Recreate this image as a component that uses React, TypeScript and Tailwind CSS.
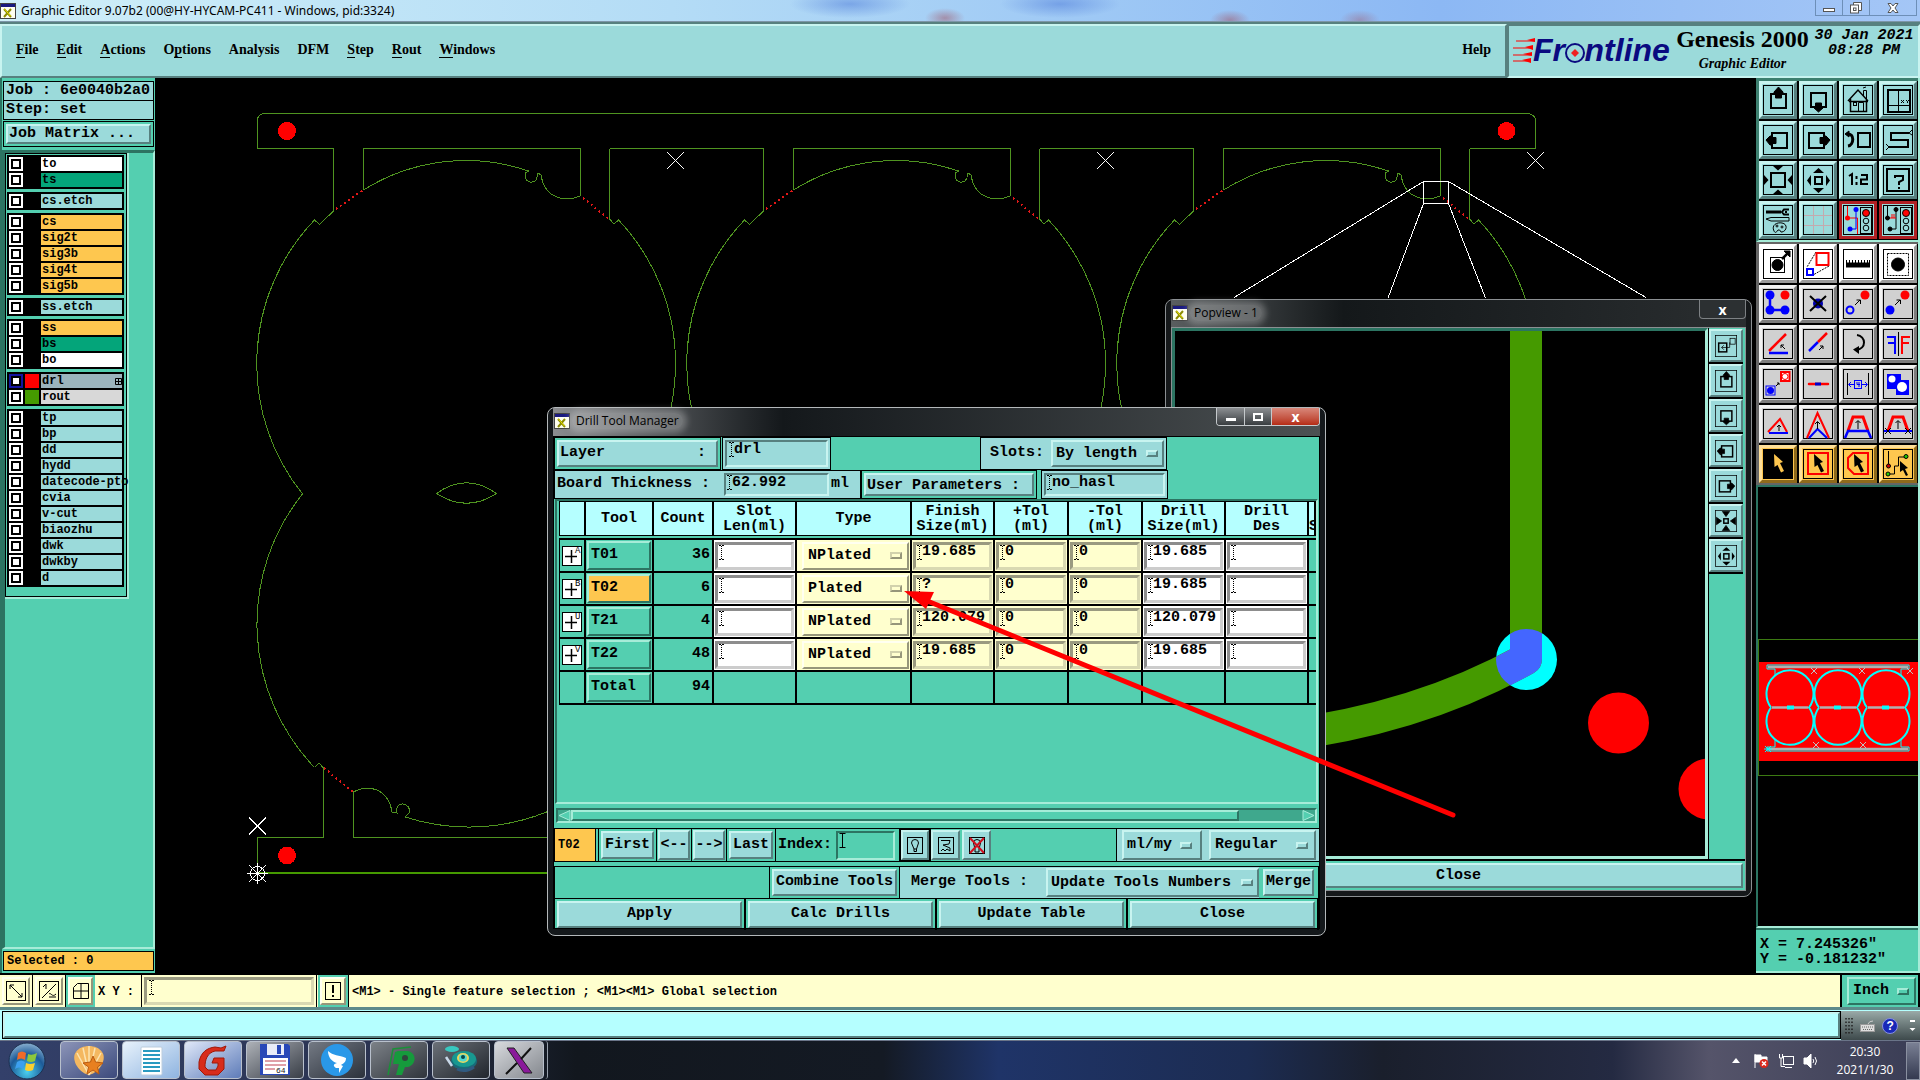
import React, { ReactNode } from 'react';

/* Raised and sunken Motif bevels */
const UP = 'border-2 border-t-[#c8f4f0] border-l-[#c8f4f0] border-r-[#57807f] border-b-[#57807f]';
const UP_GREEN = 'border-2 border-t-[#a6ecd8] border-l-[#a6ecd8] border-r-[#2c7462] border-b-[#2c7462]';
const UP_GREY = 'border-[3px] border-t-[#f2f2f2] border-l-[#f2f2f2] border-r-[#7c7c7c] border-b-[#7c7c7c]';
const UP_YELLOW = 'border-2 border-t-[#fffff0] border-l-[#fffff0] border-r-[#96967a] border-b-[#96967a]';
const NUB_YELLOW = 'border-2 border-t-[#d2d2ac] border-l-[#d2d2ac] border-r-[#96967a] border-b-[#96967a]';
const IN = 'border-2 border-t-[#57807f] border-l-[#57807f] border-r-[#c8f4f0] border-b-[#c8f4f0]';
const IN_GREEN = 'border-2 border-t-[#2c7462] border-l-[#2c7462] border-r-[#a6ecd8] border-b-[#a6ecd8]';
const IN_YELLOW = 'border-[3px] border-t-[#9a9a80] border-l-[#9a9a80] border-r-[#d9d9b2] border-b-[#d9d9b2]';
const IN_WHITE = 'border-[3px] border-t-[#8d8d8d] border-l-[#8d8d8d] border-r-[#cccccc] border-b-[#cccccc]';

function XIcon() {
  return (
    <svg width="16" height="16" viewBox="0 0 16 16" className="shrink-0">
      <rect x="0.5" y="0.5" width="15" height="15" fill="#fffff0" stroke="#444" />
      <rect x="1" y="1" width="14" height="3" fill="#1a1a80" />
      <path d="M4 6 L11 14 M11 6 L4 14" stroke="#8c8c00" strokeWidth="2" />
      <path d="M4.5 6 L10.5 13" stroke="#e8e000" strokeWidth="1" />
    </svg>
  );
}

function Beam() {
  return (
    <svg width="5" height="15" viewBox="0 0 5 15" className="shrink-0">
      <path d="M0 0.5 H2 M3 0.5 H5 M0 14.5 H2 M3 14.5 H5" stroke="#000" strokeWidth="1" />
      <path d="M2.5 1 V14" stroke="#000" strokeWidth="1" strokeDasharray="1 1" />
    </svg>
  );
}

function Field({ label, value, className }: { label: string; value: string; className: string }) {
  return (
    <div className={`flex items-start overflow-hidden ${className}`}>
      <Beam />
      <input
        aria-label={label}
        defaultValue={value}
        className="h-[14px] w-0 min-w-0 flex-1 bg-transparent text-[15px] leading-[14px] font-bold outline-none"
      />
    </div>
  );
}

function Menu({ label, value, options, className, nub }: { label: string; value: string; options: string[]; className: string; nub: string }) {
  return (
    <div className={`flex items-center ${className}`}>
      <select aria-label={label} defaultValue={value} className="min-w-0 flex-1 appearance-none bg-transparent text-[15px] leading-5 font-bold outline-none">
        {options.map((o) => (
          <option key={o}>{o}</option>
        ))}
      </select>
      <span className={`h-[7px] w-3 shrink-0 ${nub}`} />
    </div>
  );
}

/* ---------- tool icons, drawn in a 30 x 30 frame ---------- */
const Frame = ({ children, size = 30, fill = 'none' }: { children?: ReactNode; size?: number; fill?: string }) => (
  <svg width={size} height={size} viewBox="0 0 30 30" fill="none" stroke="#000" strokeWidth="1" className="shrink-0">
    <rect x="0.5" y="0.5" width="29" height="29" fill={fill} />
    {children}
  </svg>
);
const box = (x: number, y: number, w: number, h: number) => <rect x={x} y={y} width={w} height={h} strokeWidth="2" />;
const iUp = <>{box(8, 9, 15, 14)}<path d="M15.5 2 L20 7 V8 H18.500 V13 H12.500 V8 H11 V7z" fill="#000" /></>;
const iDown = <>{box(8, 8, 15, 14)}<path d="M15.500 27 L20 23 V22 H18.500 V18 H12.500 V22 H11 V23z" fill="#000" /></>;
const iLeft = <>{box(9, 8, 15, 15)}<path d="M3 15 L7 11 H8 V12.500 H13 V18.500 H8 V20 H7z" fill="#000" /></>;
const iRight = <>{box(6, 8, 15, 15)}<path d="M27 15 L23 11 H22 V12.500 H17 V18.500 H22 V20 H23z" fill="#000" /></>;
const iIn = (
  <>
    {box(8, 8, 14, 14)}
    <g fill="#000" stroke="none">
      <path d="M10 1 H20 L15 5.500z M10 29 H20 L15 24.500z M1 10 V20 L5.500 15z M29 10 V20 L24.500 15z" />
    </g>
  </>
);
const iOut = (
  <>
    {box(12, 12, 7, 7)}
    <g fill="#000" stroke="none">
      <path d="M10 8 H21 L15.500 3z M10 23 H21 L15.500 28z M8 10 V21 L4 15.500z M23 10 V21 L27 15.500z" />
    </g>
  </>
);
const lights = (
  <>
    <rect x="17.500" y="2.500" width="11" height="26" />
    <circle cx="23" cy="8" r="3.500" fill="#f00" />
    <circle cx="23" cy="16" r="2.800" />
    <circle cx="23" cy="23" r="2.800" />
  </>
);
const viewIcons: { name: string; art: ReactNode; red?: boolean }[] = [
  { name: 'Pan up', art: iUp },
  { name: 'Pan down', art: iDown },
  {
    name: 'Home',
    art: (
      <>
        <path d="M5 16 L15 5 L25 16 M7.500 14 V26.500 H23.500 V14 M6 16.500 H25" strokeWidth="1.500" />
        <rect x="10.500" y="17.500" width="3" height="3" />
        <path d="M15.500 26 V17.500 H20.500 V26 M20.500 11 V5.500 H23.500 V14 M20 3 L23 2" />
      </>
    ),
  },
  {
    name: 'Window coordinates',
    art: (
      <>
        {box(5, 5, 22, 22)}
        <path d="M15.500 5 V27 M5 20.500 H27" />
        <path d="M18 15 L21 18 M21 15 L18 18 M23 15 L24.500 16.500 L26 15 M24.500 16.500 V18" />
      </>
    ),
  },
  { name: 'Pan left', art: iLeft },
  { name: 'Pan right', art: iRight },
  {
    name: 'Previous view',
    art: (
      <>
        {box(15, 8, 12, 14)}
        <path d="M4 9 C12 8 11 20 5 21" strokeWidth="3" />
        <path d="M2 9 L6 6 V12z" fill="#000" />
      </>
    ),
  },
  {
    name: 'Serpentine',
    art: (
      <>
        <path d="M26 8 H8 V15 H25 V22 H6" strokeWidth="2" />
        <path d="M26 8 L29 5 M26 8 L29 10 M6 22 L3 19 M6 22 L3 25" />
      </>
    ),
  },
  { name: 'Zoom in', art: iIn },
  { name: 'Zoom out', art: iOut },
  {
    name: 'Zoom 1:2',
    art: <path d="M6 11 L9 9 V20 M13.500 11 V14 M13.500 17 V20 M18 10 H24 V14.500 H18 V19 H25" strokeWidth="2" />,
  },
  {
    name: 'Query',
    art: (
      <>
        {box(4, 4, 22, 22)}
        <path d="M12 13 V11 H20 V15 L16 17 V20 M16 22 V24" strokeWidth="2" />
      </>
    ),
  },
  {
    name: 'Configure',
    art: (
      <>
        <path d="M3 7 H18" strokeWidth="3" />
        <path d="M26 4.500 H21 L19 7 L21 9.500 H26 M24 7 H22" strokeWidth="2" />
        <path d="M3 14 L8 12.500 H26 V16 H8z" />
        <path d="M11 26 C8 20 14 17 19 18 C25 19 24 26 19 27 C17 28 18 24 15 25 C13 28 12 28 11 26z" />
        <circle cx="14" cy="21" r="1" />
        <circle cx="19" cy="22" r="1" />
      </>
    ),
  },
  {
    name: 'Grid',
    art: <path d="M10.500 1 V29 M20.500 1 V29 M1 10.500 H29 M1 20.500 H29" stroke="#c4a9ae" />,
  },
  {
    name: 'Net display',
    red: true,
    art: (
      <>
        <path d="M4.500 1 V13 H14.500 V29" stroke="#f00" />
        <path d="M13 5 V24 H7" stroke="#00f" />
        <circle cx="4.500" cy="13" r="2.500" fill="#f00" stroke="none" />
        <circle cx="13" cy="4.500" r="2.500" fill="#00f" stroke="none" />
        <circle cx="7" cy="24" r="2.500" fill="#00f" stroke="none" />
        {lights}
      </>
    ),
  },
  {
    name: 'Net check',
    red: true,
    art: (
      <>
        <path d="M4.500 1 V13 M13 5 V24 H7" />
        <path d="M6 13 H13 M9 9 V13 M11 9 V13" stroke="#f00" />
        <circle cx="4.500" cy="13" r="2" fill="#000" />
        <circle cx="13" cy="4.500" r="2" fill="#000" />
        <circle cx="7" cy="24" r="2" fill="#000" />
        {lights}
      </>
    ),
  },
];

const cursor = 'M11 5 L20 13 L17 14 L21 22 L18 23.500 L14.500 16 L11.500 18z';
const editIcons: { name: string; tone: 'white' | 'grey' | 'orange'; art: ReactNode; fill?: string }[] = [
  { name: 'Feature size', tone: 'white', art: <><rect x="7.500" y="8.500" width="14" height="15" /><circle cx="14.500" cy="16" r="5.500" fill="#000" /><path d="M19 10 L25 4" strokeWidth="2.500" /><path d="M21 2 H27 V8z" fill="#000" /></> },
  { name: 'Scale', tone: 'white', art: <><path d="M13 3 L4 18 M26 17 L10 26" strokeDasharray="2 1" /><rect x="13.500" y="4" width="12" height="12" stroke="#f00" strokeWidth="2" /><rect x="4" y="20" width="6" height="6" stroke="#00f" strokeWidth="2" /></> },
  { name: 'Measure', tone: 'white', art: <><path d="M3 16 H27" strokeWidth="5" /><path d="M3.500 11 V15 M6.500 11 V15 M9.500 11 V15 M12.500 11 V15 M15.500 11 V15 M18.500 11 V15 M21.500 11 V15 M24.500 11 V15 M26.500 11 V15" /></> },
  { name: 'Select feature', tone: 'white', art: <><rect x="4.500" y="4.500" width="21" height="22" strokeDasharray="2 1" /><circle cx="15" cy="15.500" r="6.500" fill="#000" /></> },
  { name: 'Copy points', tone: 'grey', art: <><path d="M7 6 V21 H22" stroke="#00f" strokeWidth="2.500" /><g stroke="none"><circle cx="7" cy="6" r="4.500" fill="#00f" /><circle cx="7" cy="21" r="4.500" fill="#00f" /><circle cx="22" cy="21" r="4.500" fill="#00f" /><circle cx="22" cy="6" r="4.500" fill="#f00" /></g></> },
  { name: 'Delete', tone: 'grey', art: <><circle cx="15" cy="14.500" r="5" fill="#0000b0" stroke="none" /><path d="M7 7 L23 22 M23 7 L7 22" strokeWidth="2" /></> },
  { name: 'Copy feature', tone: 'grey', art: <><circle cx="7" cy="21" r="3.500" stroke="#00f" strokeWidth="2" /><circle cx="22" cy="6" r="4.500" fill="#f00" stroke="none" /><path d="M12 16 L17 11 M13.500 11 H17.500 V15" /></> },
  { name: 'Move feature', tone: 'grey', art: <><circle cx="7" cy="21" r="4.500" fill="#00f" stroke="none" /><circle cx="22" cy="6" r="4.500" fill="#f00" stroke="none" /><path d="M12 16 L17 11 M13.500 11 H17.500 V15" /></> },
  { name: 'Rotate line', tone: 'grey', art: <><path d="M6 22 L23 5" stroke="#f00" strokeWidth="2.500" /><path d="M6 24 H25" stroke="#00f" strokeWidth="2.500" /><path d="M22 20 L18 16 M18 19 V16 H21" /></> },
  { name: 'Stretch line', tone: 'grey', art: <><path d="M6 22 L15 13" stroke="#00f" strokeWidth="2.500" /><path d="M15 13 L24 4" stroke="#f00" strokeWidth="2.500" /><path d="M16 21 L20 17 M17 17 H20 V20" /></> },
  { name: 'Rotate', tone: 'grey', art: <><path d="M14 6 C23 7 24 20 13 21" strokeWidth="2" /><path d="M16 17 L10 20.500 L16 25z" fill="#000" stroke="none" /></> },
  { name: 'Mirror', tone: 'grey', art: <><path d="M15.500 3 V27" /><path d="M4 8 H12 V25 M5 14 H12" stroke="#00f" strokeWidth="2" /><path d="M27 8 H19 V25 M26 14 H19" stroke="#f00" strokeWidth="2" /></> },
  { name: 'Substitute', tone: 'grey', art: <><rect x="3" y="17" width="9" height="9" stroke="#00f" /><circle cx="7.500" cy="21.500" r="3.500" fill="#00f" stroke="none" /><rect x="18" y="3" width="8.500" height="9" fill="#fff" stroke="#f00" strokeWidth="2" /><circle cx="22" cy="7.500" r="3" stroke="#f00" /><path d="M13 17 L16 14 M14 14 H16 V16" /></> },
  { name: 'Break line', tone: 'grey', art: <><path d="M6 15 H25" stroke="#f00" strokeWidth="2.500" strokeLinecap="round" /><path d="M12 15 H18" stroke="#00c" strokeWidth="3" /></> },
  { name: 'Spacing', tone: 'grey', art: <><path d="M4.500 4 V26 M25.500 4 V26" /><path d="M6 15.500 H11 M19 15.500 H24 M8 13 L5.500 15.500 L8 18 M22 13 L24.500 15.500 L22 18" stroke="#00f" /><rect x="11.500" y="11.500" width="7" height="8" stroke="#00f" /><path d="M14 13 V15.500 H17 M16 13 V18" stroke="#00f" /></> },
  { name: 'Contourize', tone: 'grey', art: <><path d="M4 5 H18 V11 H26 V26 H13 V20 H4z" fill="#00f" stroke="none" /><circle cx="9" cy="10" r="3.500" fill="#fff" stroke="none" /><circle cx="19" cy="18" r="5" fill="#fff" stroke="none" /></> },
  { name: 'Chamfer', tone: 'grey', art: <><path d="M5 23 L17 10 L24 23" stroke="#f00" strokeWidth="2" /><path d="M6 24 H25" stroke="#00f" strokeWidth="2" /><path d="M16 22 V16 M14 18 L16 16 L18 18" /></> },
  { name: 'Move corner', tone: 'grey', art: <><path d="M4 29 L14.500 4 L26 29" stroke="#f00" strokeWidth="2" /><path d="M6 29 L14.500 20 L24 29" stroke="#00f" strokeWidth="2" /><path d="M14.500 20 V13 M12 15 L14.500 12.500 L17 15" /></> },
  { name: 'Stretch parallel', tone: 'grey', art: <><path d="M5 22 L10 8 H20 L25 22" stroke="#f00" strokeWidth="3" /><path d="M2 29 L5 22 H25 L28 29" stroke="#00f" strokeWidth="2.500" /><path d="M15 20 V12 M12.500 14 L15 11.500 L17.500 14" /></> },
  { name: 'Trim parallel', tone: 'grey', art: <><path d="M5 22 L10 8 H20 L25 22" stroke="#f00" strokeWidth="3" /><path d="M1 22 H29" stroke="#00f" strokeWidth="2" /><path d="M2 19 L8 25 M8 19 L2 25 M22 19 L28 25 M28 19 L22 25 M15 20 V12 M12.500 14 L15 11.500 L17.500 14" /></> },
  { name: 'Select', tone: 'orange', fill: '#000', art: <path d={cursor} fill="#fec74f" stroke="none" /> },
  { name: 'Select in rectangle', tone: 'orange', art: <><rect x="5" y="4" width="20" height="21" stroke="#f00" strokeWidth="2" /><path d={cursor} fill="#000" stroke="none" /></> },
  { name: 'Select in polygon', tone: 'orange', art: <><path d="M10 4 H25 V25 H11 L5 19 V9z" stroke="#f00" strokeWidth="2" /><path d={cursor} fill="#000" stroke="none" /></> },
  { name: 'Select net', tone: 'orange', art: <><path d="M5.500 2 V16 M5 25 H11.500 V17 H15.500 V8 H23" /><circle cx="5.500" cy="17" r="2" fill="#c00" /><circle cx="5" cy="25" r="2" fill="#2c0" /><circle cx="23" cy="7.500" r="2" fill="#2c0" /><path d="M17 12 L25 19 L22 20 L25 26 L23 27 L20 21 L17 23z" fill="#000" stroke="none" /></> },
];

function ToolGrid() {
  return (
    <>
      <div className="border-t-[3px] border-l-[3px] border-b-2 border-t-[#3d8070] border-l-[#3d8070] border-b-[#a6ecd8] bg-black pr-px pb-px">
        <div className="grid grid-cols-4 gap-[2px]">
          {viewIcons.map((i) => (
            <button
              key={i.name}
              aria-label={i.name}
              className={
                i.red
                  ? 'flex h-[38px] items-center justify-center border-[3px] border-[#b02024] bg-[#9bdada]'
                  : 'flex h-[38px] items-center justify-center border-[3px] border-t-[#c8f4f0] border-l-[#c8f4f0] border-r-[#57807f] border-b-[#57807f] bg-[#9bdada]'
              }
            >
              <Frame>{i.art}</Frame>
            </button>
          ))}
        </div>
      </div>
      <div className="border-t-2 border-l-[3px] border-b-2 border-[#666] bg-black pr-px">
        <div className="grid grid-cols-4 gap-[2px]">
          {editIcons.map((i) => (
            <button
              key={i.name}
              aria-label={i.name}
              className={
                i.tone === 'orange'
                  ? 'flex h-[38px] items-center justify-center border-[3px] border-t-[#ffe09a] border-l-[#ffe09a] border-r-[#8f6a1c] border-b-[#8f6a1c] bg-[#fec74f]'
                  : i.tone === 'white'
                    ? 'flex h-[39px] items-center justify-center border-[3px] border-t-white border-l-white border-r-[#9a9a9a] border-b-[#9a9a9a] bg-white'
                    : `flex h-[38px] items-center justify-center bg-[#d0d0d0] ${UP_GREY}`
              }
            >
              <Frame fill={i.fill}>{i.art}</Frame>
            </button>
          ))}
        </div>
      </div>
    </>
  );
}

/* ---------- layer list ---------- */
const groups: { n: string; c: string; swatch?: string; on?: boolean }[][] = [
  [{ n: 'to', c: 'bg-white' }, { n: 'ts', c: 'bg-[#04a57a]' }],
  [{ n: 'cs.etch', c: 'bg-[#9bdada]' }],
  [
    { n: 'cs', c: 'bg-[#fec74f]' },
    { n: 'sig2t', c: 'bg-[#fec74f]' },
    { n: 'sig3b', c: 'bg-[#fec74f]' },
    { n: 'sig4t', c: 'bg-[#fec74f]' },
    { n: 'sig5b', c: 'bg-[#fec74f]' },
  ],
  [{ n: 'ss.etch', c: 'bg-[#9bdada]' }],
  [{ n: 'ss', c: 'bg-[#fec74f]' }, { n: 'bs', c: 'bg-[#04a57a]' }, { n: 'bo', c: 'bg-white' }],
  [
    { n: 'drl', c: 'bg-[#9bb4bd]', swatch: 'bg-[#ff0000]', on: true },
    { n: 'rout', c: 'bg-[#d8d8d8]', swatch: 'bg-[#459a00]' },
  ],
  ['tp', 'bp', 'dd', 'hydd', 'datecode-pto', 'cvia', 'v-cut', 'biaozhu', 'dwk', 'dwkby', 'd'].map((n) => ({ n, c: 'bg-[#9bdada]' })),
];

function Sidebar() {
  return (
    <aside className="flex w-[155px] shrink-0 flex-col border-l-2 border-[#2c7462] bg-[#54cfb0]">
      <div className="mx-px mt-[3px] border border-black bg-[#9bdada] pl-[2px] text-[15px] leading-[18px] font-bold whitespace-nowrap">Job : 6e0040b2a0</div>
      <div className="mx-px border border-t-0 border-black bg-[#9bdada] pl-[2px] text-[15px] leading-[18px] font-bold">Step: set</div>
      <div className="mx-px mt-px border border-black p-[2px]">
        <button className={`block w-full bg-[#9bdada] pl-px text-left text-[15px] leading-4 font-bold ${UP}`}>Job Matrix ...</button>
      </div>
      <div className="mt-[3px] flex flex-1 flex-col items-start border-t-[3px] border-r-2 border-b-2 border-l-[3px] border-t-[#2c7462] border-l-[#2c7462] border-r-[#a6ecd8] border-b-[#a6ecd8]">
        <div className="w-[124px] border-r-2 border-b-2 border-[#a6ecd8]">
          <div className="flex flex-col gap-[3px] border border-black pt-px pr-[2px] pb-[9px] pl-px">
            {groups.map((g, k) => (
              <div key={k} className="flex flex-col gap-[2px] bg-black p-[2px]">
                {g.map((l) => (
                  <label key={l.n} className="flex h-[14px] gap-[2px]">
                    <input
                      type="checkbox"
                      aria-label={l.n}
                      defaultChecked={l.on}
                      className="h-[14px] w-[14px] shrink-0 appearance-none border-[3px] border-white bg-white outline-2 -outline-offset-4 outline-black checked:border-[#1414a0] checked:bg-white"
                    />
                    <span className={`w-[14px] shrink-0 ${l.swatch ?? 'bg-black'}`} />
                    <span className={`flex min-w-0 flex-1 items-center justify-between pl-px text-xs leading-[14px] font-bold whitespace-nowrap ${l.c}`}>
                      {l.n}
                      {l.on && (
                        <svg width="7" height="7" viewBox="0 0 7 7" className="shrink-0">
                          <path d="M0.500 0.500 H6.500 V6.500 H0.500z M3.500 0 V7 M0 3.500 H7" fill="none" stroke="#000" />
                        </svg>
                      )}
                    </span>
                  </label>
                ))}
              </div>
            ))}
          </div>
        </div>
      </div>
      <div className="mx-px my-[2px] border border-black bg-[#fec74f] pl-[3px] text-xs leading-[18px] font-bold">Selected : 0</div>
    </aside>
  );
}

/* ---------- board drawing ---------- */
function Cell({ dx }: { dx: number }) {
  return (
    <g transform={`translate(${dx} 0)`}>
      <path d="M333.500 148.500 V211 L319.500 224.500 L314.500 220 A208 208 0 0 0 302.500 494 A208 208 0 0 0 314.500 767.500" />
      <path d="M363.500 190 V148.500 H580.500 V196" />
      <path d="M363.500 190 A196 200 0 0 1 528.500 171 L525.500 173 C522 184 539 186 537 174 L538 173 L541 175 C545 200 567 202 580 196" />
      <path d="M609.500 148.500 V219 L614 224 L618.500 220 A208 208 0 0 1 675.500 364 A208 208 0 0 1 630.500 494" />
      <path d="M436.500 493.500 Q466.500 472 496.500 493.500 Q466.500 513 436.500 493.500z" />
      <path d="M336 209 L363 190 M583 198 L609 219" stroke="#e01818" strokeWidth="2" strokeDasharray="2 3" />
    </g>
  );
}
const cross = (x: number, y: number) => `M${x - 8.5} ${y - 8.5} l17 17 M${x + 8.5} ${y - 8.5} l-17 17 `;

function Board() {
  return (
    <svg className="absolute inset-0 h-full w-full" aria-label="Board outline" shapeRendering="crispEdges">
      <g transform="translate(-155 -78)" fill="none" stroke="#4f9420" strokeWidth="1">
        <path d="M333.500 148.500 H257.500 V121 Q257.500 113.500 265 113.500 H1527 Q1535.500 114 1535.500 121 V148.500 H1469.500 M609.500 148.500 H763.500 M1039.500 148.500 H1193.500" />
        <Cell dx={0} />
        <Cell dx={430} />
        <Cell dx={860} />
        <path d="M314.500 767.500 L319 763 L323.500 768 V837.500 H257.500 V873 M353.500 792 V837.500 H700 M353.500 792 C368 784 388 788 392 812 L397 813 C394 800 412 802 409 813 L405 817 A208 208 0 0 0 560 806" />
        <path d="M257.500 873 H700" stroke="#459a00" strokeWidth="2" />
        <path d="M324 768 L353 792" stroke="#e01818" strokeWidth="2" strokeDasharray="2 3" />
        <g fill="#f00" stroke="none">
          <circle cx="287" cy="131" r="9" />
          <circle cx="1506.500" cy="131" r="9" />
          <circle cx="287" cy="855.500" r="9" />
        </g>
        <g stroke="#fff">
          <path d={cross(675.5, 160.5) + cross(1105.5, 160.5) + cross(1535.5, 160.5) + cross(257.5, 826) + cross(257.5, 873.5)} />
          <path d="M247 873.500 H268 M257.500 863 V884" />
          <circle cx="257.500" cy="873.500" r="7" />
          <path d="M1423.500 181.500 H1448.500 V203.500 H1423.500z M1423.500 181.500 L1234 297.500 M1423.500 203.500 L1388 298 M1448.500 203.500 L1485.500 298 M1448.500 181.500 L1646 297.500" />
        </g>
      </g>
    </svg>
  );
}

/* ---------- popview ---------- */
const popIcons = [
  { n: 'Popview frame', a: <>{box(5, 11, 11, 12)}<rect x="20.500" y="4.500" width="7" height="8" /><path d="M9 17 H20 V10 M12 14 L9 17 L12 20" /></> },
  { n: 'Popview up', a: iUp },
  { n: 'Popview down', a: iDown },
  { n: 'Popview left', a: iLeft },
  { n: 'Popview right', a: iRight },
  { n: 'Popview zoom in', a: <><path d="M10 2 H20 L15 9z M10 28 H20 L15 21z M2 10 V20 L9 15z M28 10 V20 L21 15z" fill="#000" /><rect x="12" y="12" width="6" height="6" strokeWidth="2" /></> },
  { n: 'Popview zoom out', a: iOut },
];

const glow = 'rounded-full bg-white/25 px-1 leading-4 shadow-[0_0_6px_4px_rgba(255,255,255,0.25)]';

function Popview() {
  return (
    <section className="absolute top-[299px] left-[1165px] flex h-[598px] w-[587px] flex-col rounded-lg border border-[#8b8f92] bg-[#15181a] px-[5px] pb-[5px]">
      <header className="flex h-[27px] shrink-0 items-start bg-linear-to-r from-[#5a5e60] via-[#14181a] via-30% to-[#2a2e30]">
        <div className="flex items-center gap-[2px] pt-[5px] pl-px font-['Open_Sans',sans-serif] text-xs text-black">
          <XIcon />
          <span className={glow}>Popview - 1</span>
        </div>
        <button aria-label="Close popview" className="ml-auto h-[19px] w-[47px] rounded-b border border-t-0 border-[#7d8184] bg-[#2c3032] font-['Open_Sans',sans-serif] text-sm leading-[15px] font-bold text-white">x</button>
      </header>
      <div className="flex min-h-0 flex-1 flex-col border border-[#8b8f92] bg-[#54cfb0]">
        <div className="flex min-h-0 flex-1">
          <div className="relative min-w-0 flex-1 border-[3px] border-t-[#2c7462] border-l-[#2c7462] border-r-[#a6ecd8] border-b-[#a6ecd8] bg-black">
            <svg className="absolute inset-0 h-full w-full" aria-label="Magnified view">
              <defs>
                <clipPath id="pad">
                  <circle cx="1526.500" cy="659.500" r="30.500" />
                </clipPath>
              </defs>
              <g transform="translate(-1175 -331)">
                <circle cx="1526.500" cy="659.500" r="30.500" fill="#00ffff" />
                <path d="M1526 331 V659 Q1418 719 1280 736" fill="none" stroke="#459a00" strokeWidth="32" strokeLinejoin="round" />
                <path d="M1526 331 V659 Q1418 719 1280 736" fill="none" stroke="#4466ff" strokeWidth="32" strokeLinejoin="round" clipPath="url(#pad)" />
                <circle cx="1618.500" cy="723" r="30.500" fill="#f00" />
                <circle cx="1709" cy="789" r="30.500" fill="#f00" />
              </g>
            </svg>
          </div>
          <div className="flex w-[37px] flex-col gap-[2px] border-l border-black pt-px pr-[2px]">
            {popIcons.map((i) => (
              <button key={i.n} aria-label={i.n} className={`flex h-[33px] items-center justify-center bg-[#9bdada] shadow-[0_2px_0_#000] ${UP}`}>
                <Frame size={22}>{i.a}</Frame>
              </button>
            ))}
          </div>
        </div>
        <div className="border-t-2 border-black p-[2px]">
          <button className={`block w-full bg-[#9bdada] pt-px text-center text-[15px] leading-5 font-bold ${UP}`}>Close</button>
        </div>
      </div>
    </section>
  );
}

/* ---------- drill tool manager ---------- */
const tools = [
  { mark: 'A', t: 'T01', c: '36', type: 'NPlated', f: '19.685', d: '19.685' },
  { mark: 'B', t: 'T02', c: '6', type: 'Plated', f: '?', d: '19.685' },
  { mark: 'U', t: 'T21', c: '4', type: 'NPlated', f: '120.079', d: '120.079' },
  { mark: 'V', t: 'T22', c: '48', type: 'NPlated', f: '19.685', d: '19.685' },
];
const heads = [['Tool'], ['Count'], ['Slot', 'Len(ml)'], ['Type'], ['Finish', 'Size(ml)'], ['+Tol', '(ml)'], ['-Tol', '(ml)'], ['Drill', 'Size(ml)'], ['Drill', 'Des'], ['', 'S']];
const cell = 'h-[33px] border-r-2 border-b-2 border-black p-px';

function ToolTable() {
  return (
    <table className="w-[757px] table-fixed border-separate border-spacing-0 text-[15px] font-bold">
      <colgroup>
        <col className="w-[27px]" />
        <col className="w-[68px]" />
        <col className="w-[60px]" />
        <col className="w-[83px]" />
        <col className="w-[115px]" />
        <col className="w-[83px]" />
        <col className="w-[74px]" />
        <col className="w-[74px]" />
        <col className="w-[83px]" />
        <col className="w-[83px]" />
        <col className="w-[7px]" />
      </colgroup>
      <thead>
        <tr>
          <td className="h-[35px] border border-r-2 border-black bg-[#b5ffff]" />
          {heads.map((h, k) => (
            <th key={k} className="h-[35px] overflow-hidden border-y border-r-2 border-black bg-[#b5ffff] p-0 leading-[15px] font-bold">
              {h.map((w) => (
                <div key={w} className="min-h-[15px]">{w}</div>
              ))}
            </th>
          ))}
        </tr>
        <tr><td colSpan={11} className="h-1 border-b-2 border-black p-0" /></tr>
      </thead>
      <tbody>
        {tools.map((r) => (
          <tr key={r.t}>
            <td className={`${cell} border-l`}>
              <svg width="20" height="20" viewBox="0 0 20 20" className="ml-px">
                <rect x="0.500" y="0.500" width="19" height="19" fill="#fff" stroke="#000" />
                <path d="M3 10.500 H15 M9.500 4 V17" stroke="#000" strokeWidth="1.500" />
                <text x="13" y="7" fontSize="9" fontWeight="400">{r.mark}</text>
              </svg>
            </td>
            <td className={cell}>
              <button className={`block h-[29px] w-full pl-[2px] text-left ${UP_GREEN} ${r.t === 'T02' ? 'bg-[#fec74f]' : 'bg-[#54cfb0]'}`}>{r.t}</button>
            </td>
            <td className={`${cell} pr-[2px] text-right`}>{r.c}</td>
            <td className={`${cell} bg-white`}><Field label={`${r.t} slot length`} value="" className={`h-[28px] pl-px ${IN_WHITE}`} /></td>
            <td className={`${cell} bg-[#ffffce] pl-[5px]`}>
              <Menu label={`${r.t} type`} value={r.type} options={['NPlated', 'Plated', 'Via']} className={`h-[28px] pr-[5px] pl-1 ${UP_YELLOW}`} nub={NUB_YELLOW} />
            </td>
            <td className={`${cell} bg-[#ffffce]`}><Field label={`${r.t} finish size`} value={r.f} className={`h-[28px] pl-px ${IN_YELLOW}`} /></td>
            <td className={`${cell} bg-[#ffffce]`}><Field label={`${r.t} plus tolerance`} value="0" className={`h-[28px] pl-px ${IN_YELLOW}`} /></td>
            <td className={`${cell} bg-[#ffffce]`}><Field label={`${r.t} minus tolerance`} value="0" className={`h-[28px] pl-px ${IN_YELLOW}`} /></td>
            <td className={`${cell} bg-white`}><Field label={`${r.t} drill size`} value={r.d} className={`h-[28px] pl-px ${IN_WHITE}`} /></td>
            <td className={`${cell} bg-white`}><Field label={`${r.t} drill designator`} value="" className={`h-[28px] pl-px ${IN_WHITE}`} /></td>
            <td className="border-b-2 border-black p-0" />
          </tr>
        ))}
        <tr>
          <td className={`${cell} border-l`} />
          <td className={cell}><button className={`block h-[29px] w-full bg-[#54cfb0] pl-[2px] text-left ${UP_GREEN}`}>Total</button></td>
          <td className={`${cell} pr-[2px] text-right`}>94</td>
          {[0, 1, 2, 3, 4, 5, 6].map((k) => (
            <td key={k} className={cell} />
          ))}
          <td className="border-b-2 border-black p-0" />
        </tr>
      </tbody>
    </table>
  );
}

function Slot({ children, className }: { children?: ReactNode; className?: string }) {
  return <div className={`flex items-stretch border border-black p-[2px] ${className ?? ''}`}>{children}</div>;
}
const btn = `bg-[#9bdada] whitespace-nowrap ${UP}`;

function DrillManager() {
  return (
    <section className="absolute top-[407px] left-[547px] flex h-[529px] w-[779px] flex-col rounded-lg border border-[#b4b8ba] bg-[#14181b] px-[5px] pb-[6px]">
      <header className="flex h-[28px] shrink-0 items-start bg-linear-to-r from-[#8b8d90] via-[#14181b] via-30% to-[#4c5153]">
        <div className="flex items-center gap-[2px] pt-[5px] pl-px font-['Open_Sans',sans-serif] text-xs text-black">
          <XIcon />
          <span className={glow}>Drill Tool Manager</span>
        </div>
        <div className="ml-auto flex h-[18px] overflow-hidden rounded-b border border-t-0 border-[#c5c9cc] font-['Open_Sans',sans-serif] text-white">
          <button aria-label="Minimize" className="flex w-[28px] items-end justify-center border-r border-[#c5c9cc] bg-linear-to-b from-[#8c8f92] to-[#3a3e41] pb-1"><span className="h-[3px] w-[10px] bg-white" /></button>
          <button aria-label="Maximize" className="flex w-[27px] items-center justify-center border-r border-[#c5c9cc] bg-linear-to-b from-[#8c8f92] to-[#3a3e41]"><span className="h-2 w-[10px] border-2 border-white" /></button>
          <button aria-label="Close window" className="w-[47px] bg-linear-to-b from-[#d8877a] to-[#b52a14] text-sm leading-[14px] font-bold">x</button>
        </div>
      </header>
      <div className="flex min-h-0 flex-1 flex-col border border-black bg-[#54cfb0] text-[15px] font-bold">
        <div className="flex h-[33px] shrink-0">
          <Slot className="w-[167px]"><button className={`flex flex-1 items-center justify-between pr-[10px] pl-px ${btn}`}><span>Layer</span><span>:</span></button></Slot>
          <Slot className="ml-px w-[109px] bg-[#9bdada]"><Field label="Layer" value="drl" className={`flex-1 pl-[2px] ${IN}`} /></Slot>
          <div className="ml-auto" />
          <Slot className="mr-[152px] w-[187px] bg-[#9bdada]">
            <span className="self-center px-[7px]">Slots:</span>
            <Menu label="Slots" value="By length" options={['By length', 'By count']} className={`flex-1 pr-1 pl-[3px] ${UP}`} nub={UP} />
          </Slot>
        </div>
        <div className="flex h-[29px] shrink-0">
          <Slot className="w-[307px] bg-[#9bdada]">
            <span className="w-[167px] shrink-0 self-center">Board Thickness :</span>
            <Field label="Board Thickness" value="62.992" className={`w-[105px] pl-px ${IN}`} />
            <span className="self-center pl-[2px]">ml</span>
          </Slot>
          <Slot className="w-[176px]"><button className={`flex-1 pl-px text-left ${btn}`}>User Parameters :</button></Slot>
          <Slot className="ml-1 w-[127px] bg-[#9bdada]"><Field label="User Parameters" value="no_hasl" className={`flex-1 pl-px ${IN}`} /></Slot>
        </div>
        <div className={`mx-px min-h-0 flex-1 overflow-hidden pl-[2px] ${IN_GREEN}`}><ToolTable /></div>
        <div className={`mx-[2px] mt-1 flex h-[15px] shrink-0 items-center bg-[#3fa88d] ${IN_GREEN}`}>
          <svg width="13" height="11" viewBox="0 0 13 11"><path d="M12 0.500 L1 5.500 L12 10.500z" fill="#54cfb0" stroke="#a6ecd8" /></svg>
          <div className={`h-full w-[668px] bg-[#54cfb0] ${UP_GREEN}`} />
          <svg width="13" height="11" viewBox="0 0 13 11" className="ml-auto"><path d="M1 0.500 L12 5.500 L1 10.500z" fill="#54cfb0" stroke="#a6ecd8" /></svg>
        </div>
        <div className="mt-[5px] flex h-[34px] shrink-0 border-y border-black">
          <div className="flex w-[42px] items-center border-x border-black bg-[#fec74f] pl-[3px] text-xs">T02</div>
          <div className="ml-[2px] flex border-l border-black">
            <div className="flex border-r border-black p-[2px]"><button className={`w-[53px] ${btn}`}>First</button></div>
            <div className="flex border-r border-black p-px"><button className={`flex w-[32px] justify-center ${btn} items-center`}>&lt;--</button></div>
            <div className="flex border-r border-black p-px"><button className={`flex w-[32px] justify-center ${btn} items-center`}>--&gt;</button></div>
            <div className="flex border-r border-black p-[2px]"><button className={`w-[44px] ${btn}`}>Last</button></div>
          </div>
          <label className="flex items-center pl-[2px]">
            <span className="pr-1">Index:</span>
            <span className={`flex h-[29px] w-[59px] items-start ${IN_GREEN}`}>
              <svg width="7" height="15" viewBox="0 0 7 15" className="ml-px shrink-0"><path d="M0.500 0.500 H6.500 M3.500 0.500 V14.500 M0.500 14.500 H6.500" stroke="#000" /></svg>
              <input className="w-0 flex-1 bg-transparent outline-none" />
            </span>
          </label>
          <div className="ml-1 flex border-l border-black">
            <button aria-label="Highlight" className={`m-px flex w-[28px] items-center justify-center bg-[#9bdada] outline-2 outline-black ${UP}`}>
              <svg width="16" height="17" viewBox="0 0 16 17" fill="none" stroke="#000"><rect x="0.500" y="0.500" width="15" height="16" /><path d="M7 12 L4.500 6 A3.500 3.500 0 1 1 11.500 6 L9.500 12 M7 12 V14.500 H9.500 V12z" /></svg>
            </button>
            <button aria-label="Trace" className={`m-px flex w-[29px] items-center justify-center bg-[#9bdada] ${UP}`}>
              <svg width="16" height="17" viewBox="0 0 16 17" fill="none" stroke="#000"><rect x="0.500" y="0.500" width="15" height="16" /><path d="M3 3.500 H12 L11 7 L5 8 L12 11 V14 L9 12 L7 14 L5 12 L3 14" /></svg>
            </button>
            <button aria-label="Remove highlight" className={`m-px flex w-[29px] items-center justify-center bg-[#9bdada] ${UP}`}>
              <svg width="16" height="17" viewBox="0 0 16 17" fill="none" stroke="#000"><rect x="0.500" y="0.500" width="15" height="16" /><path d="M6 12 L4.500 6 A3.500 3.500 0 1 1 11.500 6 L10 12 V15 H6z" /><path d="M1 1 L15 16 M15 1 L1 16" stroke="#d01020" strokeWidth="2" /></svg>
            </button>
          </div>
          <div className="ml-auto flex border-l border-black bg-[#9bdada]">
            <Menu label="Units" value="ml/my" options={['ml/my', 'inch/mm']} className={`my-px ml-[5px] w-[80px] pr-2 pl-[3px] ${UP}`} nub={UP} />
            <Menu label="Mode" value="Regular" options={['Regular', 'Compact']} className={`my-px ml-[7px] mr-[3px] w-[107px] pr-[6px] pl-1 ${UP}`} nub={UP} />
          </div>
        </div>
        <div className="mt-[4px] flex h-[33px] shrink-0 border border-black">
          <div className="ml-auto flex border-l border-black p-[2px]"><button className={`px-[2px] ${btn}`}>Combine Tools</button></div>
          <div className="flex items-center border-l border-black bg-[#9bdada]">
            <span className="pr-[18px] pl-[11px]">Merge Tools :</span>
            <Menu label="Merge Tools" value="Update Tools Numbers" options={['Update Tools Numbers', 'Keep Tools Numbers']} className={`h-[29px] w-[213px] pr-1 pl-[3px] ${UP}`} nub={UP} />
          </div>
          <div className="flex bg-[#54cfb0] py-[2px] pr-1 pl-1"><button className={`px-px ${btn}`}>Merge</button></div>
        </div>
        <div className="grid h-[29px] shrink-0 grid-cols-4 border-l border-black">
          {['Apply', 'Calc Drills', 'Update Table', 'Close'].map((t) => (
            <div key={t} className="flex border-r-2 border-black p-[2px]"><button className={`flex-1 ${btn}`}>{t}</button></div>
          ))}
        </div>
      </div>
    </section>
  );
}

/* ---------- top area ---------- */
const menus: [string, string, string][] = [
  ['', 'F', 'ile'],
  ['', 'E', 'dit'],
  ['', 'A', 'ctions'],
  ['O', 'p', 'tions'],
  ['Analysis', '', ''],
  ['DFM', '', ''],
  ['', 'S', 'tep'],
  ['', 'R', 'out'],
  ['', 'W', 'indows'],
];

function TopBar() {
  return (
    <>
      <header className="flex h-[22px] shrink-0 items-center overflow-hidden border-b border-[#7d96a8] bg-[radial-gradient(ellipse_20px_10px_at_945px_18px,#a0506080,transparent),radial-gradient(ellipse_20px_10px_at_1230px_20px,#a0506080,transparent),radial-gradient(ellipse_20px_10px_at_1360px_20px,#a0506060,transparent),radial-gradient(ellipse_60px_14px_at_850px_4px,#4a78d880,transparent),radial-gradient(ellipse_60px_14px_at_1060px_4px,#4a78d880,transparent),linear-gradient(90deg,#cfeff8,#b4dcf6_35%,#8cb8f4_75%,#a4c6f6)] font-['Noto_Sans',sans-serif]">
        <XIcon />
        <h1 className="pl-[5px] text-xs whitespace-nowrap">Graphic Editor 9.07b2 (00@HY-HYCAM-PC411 - Windows, pid:3324)</h1>
        <div className="ml-auto mr-[3px] flex h-full self-start pb-[5px]">
          <button aria-label="Minimize editor" className="flex w-[28px] items-center justify-center border border-t-0 border-[#6d8fb8]"><span className="mt-1 h-1 w-3 border border-[#555] bg-white" /></button>
          <button aria-label="Restore editor" className="flex w-[27px] items-center justify-center border-r border-b border-[#6d8fb8]">
            <svg width="12" height="12" viewBox="0 0 12 12" fill="none"><path d="M3.500 3 V0.500 H11.500 V8.500 H9" fill="#fff" stroke="#555" /><rect x="0.500" y="3" width="8" height="8" fill="#fff" stroke="#555" /><rect x="3.500" y="6" width="2.500" height="2.500" stroke="#555" /></svg>
          </button>
          <button aria-label="Close editor" className="flex w-[47px] items-center justify-center border-r border-b border-[#6d8fb8]">
            <svg width="12" height="10" viewBox="0 0 12 10"><path d="M1 0.500 H4 L6 3 L8 0.500 H11 L8 5 L11 9.500 H8 L6 7 L4 9.500 H1 L4 5z" fill="#fff" stroke="#555" /></svg>
          </button>
        </div>
      </header>
      <div className="flex h-14 shrink-0 border-t-2 border-[#57807f] font-['Liberation_Serif',serif]">
        <nav className={`flex flex-1 items-center gap-[18px] bg-[#9bdada] px-[14px] pb-[2px] text-sm font-bold ${UP}`}>
          {menus.map(([a, u, b]) => (
            <button key={a + u + b} className="leading-5">
              {a}
              {u && <span className="border-b border-black">{u}</span>}
              {b}
            </button>
          ))}
          <button className="ml-auto">Help</button>
        </nav>
        <div className={`flex w-[413px] shrink-0 items-start bg-[#9bdada] ${IN}`}>
          <svg width="162" height="46" viewBox="0 0 162 46" className="ml-1 shrink-0" aria-label="Frontline logo">
            <g stroke="#f00" strokeWidth="1">
              <path d="M3 15 H22 M0 22 H20 M0 29 H18 M0 35 H16" />
            </g>
            <g fill="#f00">
              <path d="M14 14 L22 12 V16z M12 21 L20 19 V24z M10 28 L19 26 V30z M9 34 L18 32 V37z" />
            </g>
            <text x="20" y="35" fontFamily="Liberation Sans" fontSize="32" fontWeight="700" fontStyle="italic" fill="#0a0a80">Frontline</text>
            <circle cx="62" cy="27" r="10.500" fill="#9bdada" />
            <circle cx="62" cy="27" r="9" fill="#9bdada" stroke="#0a0a80" strokeWidth="2" />
            <path d="M62 23 L66 27 L62 31 L58 27z" fill="#f02020" />
          </svg>
          <div className="w-[135px] shrink-0 text-center font-bold">
            <div className="text-2xl leading-[26px]">Genesis 2000</div>
            <div className="pt-[2px] text-sm leading-5 italic">Graphic Editor</div>
          </div>
          <div className="flex-1 pt-[2px] text-center font-['Liberation_Mono',monospace] text-[15px] leading-[15px] font-bold whitespace-nowrap italic">
            <div>30 Jan 2021</div>
            <div>08:28 PM</div>
          </div>
        </div>
      </div>
    </>
  );
}

const twin = (x: number) => `M${x - 19} 69.5 A23.5 23.5 0 1 1 ${x + 19} 69.5 A23.5 23.5 0 1 1 ${x - 19} 69.5 `;

function RightPanel() {
  return (
    <aside className="flex w-[164px] shrink-0 flex-col border-r-2 border-[#a6ecd8] bg-black">
      <ToolGrid />
      <div className="min-h-0 flex-1 border-t-2 border-b-2 border-l-2 border-t-[#2c7462] border-l-[#2c7462] border-b-[#a6ecd8]">
        <svg className="mt-[151px] h-[140px] w-full" viewBox="0 0 160 140" aria-label="Board overview">
          <rect x="0.500" y="1.500" width="162" height="136" fill="none" stroke="#3c7a12" />
          <rect x="1" y="24" width="160" height="99" fill="#f00" />
          <path d="M10 29 H150 M14 69.500 H50 M62 69.500 H98 M110 69.500 H146 M10 111 H150" stroke="#b0b0b0" strokeWidth="2.500" />
          <g fill="none" stroke="#00ffff" strokeWidth="2">
            <path d={twin(32) + twin(80) + twin(128)} />
            <path d="M9 27 V31 H17 V38 M151 27 V31 H143 V38 M9 113 V109 H17 V102 M151 113 V109 H143 V102 M9 27 H151 M9 113 H151" strokeWidth="1" />
          </g>
          <path d="M29 69.500 H36 M76 69.500 H83 M124 69.500 H131" stroke="#00ffff" strokeWidth="4" />
          <path d="M53 30 l6 6 m0 -6 l-6 6 M101 30 l6 6 m0 -6 l-6 6 M149 30 l6 6 m0 -6 l-6 6 M55 104 l6 6 m0 -6 l-6 6 M102 104 l6 6 m0 -6 l-6 6" stroke="#c0c0c0" />
          <path d="M7 108 l6 6 m0 -6 l-6 6 M6 111 H14" stroke="#00ffff" />
        </svg>
      </div>
      <div className="border-t-2 border-b-2 border-t-[#2c7462] border-b-[#a6ecd8] bg-[#54cfb0] pt-[7px] pb-1 pl-1 text-[15px] leading-[15px] font-bold">
        <div>X = 7.245326"</div>
        <div>Y = -0.181232"</div>
      </div>
    </aside>
  );
}

const small = 'flex w-[29px] items-center justify-center border-2 border-t-[#fffff0] border-l-[#fffff0] border-r-[#96967a] border-b-[#96967a] bg-[#ffffce]';
function CommandBar() {
  return (
    <div className="flex h-[32px] shrink-0 bg-[#ffffce] text-xs font-bold">
      <div className="flex w-[33px] border-r border-black p-[2px]">
        <button aria-label="Snap diagonal" className={small}><svg width="20" height="20" viewBox="0 0 20 20" fill="none" stroke="#000"><rect x="0.500" y="0.500" width="19" height="19" /><path d="M4 4 L16 16 M4 8 V4 H8 M16 12 V16 H12" /></svg></button>
      </div>
      <div className="flex w-[33px] border-r border-black p-[2px]">
        <button aria-label="Snap angle" className={small}><svg width="20" height="20" viewBox="0 0 20 20" fill="none" stroke="#000"><rect x="0.500" y="0.500" width="19" height="19" /><path d="M3 17 L17 3 M4 6 L7 3 V8" /><path d="M10 13 C12 11 13 17 17 13 M10 16 H17" /></svg></button>
      </div>
      <div className="flex w-[29px] bg-[#54cfb0] p-[2px]">
        <button aria-label="Snap grid" className={small}><svg width="18" height="20" viewBox="0 0 18 20" fill="none" stroke="#000"><path d="M5.500 2.500 H16.500 V17.500 H1.500 V6.500z M1 10 H17 M9 2 V18" /></svg></button>
      </div>
      <label htmlFor="xy" className="flex w-[47px] items-center border-r border-black pt-px pl-[3px]">X Y :</label>
      <div className="flex border-r border-black p-[2px]">
        <div className={`flex w-[170px] items-start pl-[2px] ${IN_YELLOW}`}>
          <Beam />
          <input id="xy" className="w-0 flex-1 bg-transparent outline-none" />
        </div>
      </div>
      <div className="ml-px flex w-[31px] border-r border-black bg-[#54cfb0] p-[2px]">
        <button aria-label="Interrupt" className={small}><svg width="16" height="18" viewBox="0 0 16 18" fill="none" stroke="#000"><rect x="0.500" y="0.500" width="15" height="17" /><path d="M8 3 V11 M8 13 V15" strokeWidth="2" /></svg></button>
      </div>
      <p className="flex flex-1 items-center pt-px pl-[3px] whitespace-pre">{'<M1> - Single feature selection ; <M1><M1> Global selection'}</p>
      <div className="flex w-[80px] border-x-2 border-black bg-[#54cfb0] py-[2px] pr-[2px] pl-[5px]">
        <Menu label="Units of measure" value="Inch" options={['Inch', 'MM']} className={`flex-1 pr-[5px] pl-1 ${UP_GREEN}`} nub={UP_GREEN} />
      </div>
    </div>
  );
}

const apps: { n: string; c: string; art: ReactNode }[] = [
  { n: 'Shell', c: 'w-[58px] from-[#8d95b8] to-[#3c4a7c]', art: <><path d="M18 33 C6 30 0 16 5 10 C10 2 26 2 31 10 C36 16 30 30 18 33z" fill="#f4b860" /><path d="M18 33 L6 11 M18 33 L12 6 M18 33 V4 M18 33 L24 6 M18 33 L30 11" stroke="#fce3b0" strokeWidth="1.500" /><path d="M22 14 L24.500 20 L32 21 L26.500 25 L28 32 L22 28 L16 32 L17.500 25 L12 21 L19.500 20z" fill="#e88020" stroke="#b85a10" /></> },
  { n: 'Notepad', c: 'w-[58px] from-[#e8f2fb] to-[#8fb4e0]', art: <><rect x="8" y="5" width="21" height="28" rx="1" fill="#fff" stroke="#bcd" /><path d="M10 9 H27 M10 13 H27 M10 17 H27 M10 21 H27 M10 25 H27 M10 29 H27" stroke="#2a9ac0" strokeWidth="2" /></> },
  { n: 'Genesis', c: 'w-[58px] from-[#e0e8f8] to-[#5f7cb8]', art: <path d="M31 4 L29 9 H20 C12 11 10 18 10 25 L13 28 H21 L23 24 V21 H17 L19 16 H29 V27 L23 33 H10 L4 27 V20 C6 10 12 6 20 5 L26 6z" fill="#d82c1c" stroke="#a01808" /> },
  { n: 'Disk', c: 'w-[58px] from-[#aeb2b8] to-[#3a3f48]', art: <><path d="M3 2 H31 L33 4 V33 H3z" fill="#2848b8" /><rect x="10" y="2" width="17" height="11" fill="#e8ecf8" /><rect x="20" y="3" width="4" height="9" fill="#2848b8" /><rect x="6" y="16" width="25" height="16" fill="#fff" /><path d="M8 19 H29 M8 23 H29 M8 27 H18" stroke="#c04050" /><text x="19" y="31" fontSize="8" fontFamily="Liberation Mono" fill="#222">64</text></> },
  { n: 'DingTalk', c: 'w-[58px] from-[#747a84] to-[#2c323c]', art: <><circle cx="18" cy="18" r="16" fill="#2a98e8" /><path d="M9 9 C14 14 20 13 27 16 C27 20 25 21 22 23 L24 24 L20 31 L20 26 L17 26 C14 24 14 22 18 21 C13 20 9 15 9 9z" fill="#fff" /></> },
  { n: 'Project', c: 'w-[58px] from-[#7d8288] to-[#30353c]', art: <><path d="M7 33 L12 7 L30 5" fill="none" stroke="#1a9038" strokeWidth="1.500" /><path d="M17 9 H27 C38 12 34 26 24 25 L21 33 H15 L18 22 H12 L14 10z" fill="#169a3c" /><circle cx="24" cy="16" r="3" fill="#30453c" /></> },
  { n: 'Incam', c: 'w-[58px] from-[#6c7178] to-[#22272e]', art: <><ellipse cx="21" cy="19" rx="13" ry="9" fill="#1a6a78" /><ellipse cx="21" cy="17" rx="12" ry="8" fill="#189890" /><ellipse cx="20" cy="16" rx="6" ry="5" fill="#e8d860" /><ellipse cx="20" cy="16" rx="4" ry="3.500" fill="#50d8d0" /><circle cx="20" cy="15" r="2" fill="#084848" /><ellipse cx="9" cy="7" rx="7" ry="3" fill="#38c8c0" /><path d="M3 15 L9 24" stroke="#c8d8e8" strokeWidth="2.500" /><path d="M14 27 Q22 31 31 25" stroke="#305a80" strokeWidth="3" fill="none" /></> },
  { n: 'X server', c: 'w-[50px] from-[#d8dade] to-[#84888e]', art: <><path d="M6 6 H13 L31 31 H23z" fill="#8a1a9a" stroke="#222" /><path d="M30 6 L20 17 M16 21 L5 32" stroke="#111" strokeWidth="2" /></> },
];

function Taskbar() {
  return (
    <footer className="flex h-[40px] shrink-0 border-t border-[#6a7488] bg-[linear-gradient(90deg,#33406a_0%,#2a3350_20%,#12171e_30%,#141a24_46%,#1f3468_52%,#1c2c52_65%,#1a1f2c_72%,#242a42_84%,#55546a_89%,#3a3d55_100%)] font-['Open_Sans',sans-serif] text-white">
      <button aria-label="Start" className="flex w-[60px] shrink-0 items-center pl-2">
        <svg width="40" height="38" viewBox="0 0 40 38">
          <defs>
            <radialGradient id="orb" cx="0.5" cy="0.8" r="0.8"><stop offset="0" stopColor="#4ad0f0" /><stop offset="0.600" stopColor="#1c5a98" /><stop offset="1" stopColor="#8ab0d0" /></radialGradient>
          </defs>
          <circle cx="19" cy="19" r="18" fill="url(#orb)" stroke="#1c3050" />
          <path d="M10 11 Q14 8 18 11 L17 18 Q13 15 9 18z" fill="#f06a28" />
          <path d="M20 12 Q24 14 29 11 L27 19 Q23 21 19 19z" fill="#8cc83c" />
          <path d="M9 20 Q13 17 17 20 L15 27 Q11 24 7 27z" fill="#3ca0f0" />
          <path d="M18 21 Q22 23 27 21 L25 28 Q21 30 17 28z" fill="#fcd030" />
        </svg>
      </button>
      <div className="flex gap-1 pb-px">
        {apps.map((a) => (
          <button key={a.n} aria-label={a.n} className={`flex items-center justify-center rounded-sm border border-[#b8c0cc] bg-linear-to-br ${a.c}`}>
            <svg width="36" height="36" viewBox="0 0 36 36" className="shrink-0">{a.art}</svg>
          </button>
        ))}
        <span className="-ml-[3px] w-[3px] rounded-r-sm border-r border-[#98a0ac]" />
      </div>
      <div className="ml-auto flex items-center gap-[9px]">
        <svg width="8" height="5" viewBox="0 0 8 5"><path d="M4 0 L8 5 H0z" fill="#fff" /></svg>
        <svg width="16" height="16" viewBox="0 0 16 16" className="ml-1"><path d="M2 1 V15 M2 2 H8 V4 H14 V9 H2z" fill="#fff" stroke="#fff" /><circle cx="11" cy="10.500" r="4.500" fill="#d8281c" /><path d="M9 8.500 L13 12.500 M13 8.500 L9 12.500" stroke="#fff" strokeWidth="1.500" /></svg>
        <svg width="16" height="16" viewBox="0 0 16 16" fill="none" stroke="#fff"><rect x="5.500" y="3.500" width="10" height="8" /><path d="M7 14.500 H14 M1.500 1 V5 H4.500 V1 M3 5 V13.500 H7" /></svg>
        <svg width="17" height="16" viewBox="0 0 17 16" fill="none" stroke="#fff"><path d="M1 5 H4 L8 1 V15 L4 11 H1z" fill="#fff" /><path d="M10 6 Q11.500 8 10 10 M12 4 Q15 8 12 12" /></svg>
        <div className="ml-1 w-[64px] pt-px text-center text-xs leading-[18px] whitespace-nowrap">
          <div>20:30</div>
          <div>2021/1/30</div>
        </div>
        <div className="h-[38px] w-[14px] border border-[#8a90a0] bg-linear-to-b from-[#7a8094] to-[#353a50]" />
      </div>
    </footer>
  );
}

export default function App() {
  return (
    <div className="relative flex h-screen w-full flex-col overflow-hidden bg-black font-['Liberation_Mono',monospace] text-black">
      <TopBar />
      <main className="flex min-h-0 flex-1">
        <Sidebar />
        <div className="relative min-w-0 flex-1 overflow-hidden bg-black">
          <Board />
        </div>
        <RightPanel />
      </main>
      <div className="h-[2px] shrink-0 bg-black" />
      <CommandBar />
      <div className="flex h-[33px] shrink-0 border-t-[3px] border-t-[#5d8a8a] bg-[#b5ffff]">
        <div className="my-px ml-[2px] flex-1 border border-black">
          <div className={`h-full ${UP}`} />
        </div>
        <div className="mt-px flex w-[79px] items-center gap-[7px] bg-linear-to-b from-[#9aaaa8] to-[#3e4a4c] pl-1">
          <svg width="8" height="18" viewBox="0 0 8 18"><path d="M1 1 V18 M4 1 V18 M7 1 V18" stroke="#222" strokeWidth="1.500" strokeDasharray="1.500 2" /></svg>
          <svg width="15" height="12" viewBox="0 0 15 12"><rect x="0.500" y="4.500" width="14" height="7" fill="#ddd" stroke="#999" /><path d="M2 7 H13 M3 9.500 H12" stroke="#666" strokeDasharray="1 1" /><path d="M8 4 Q9 1 13 1" fill="none" stroke="#ccc" /></svg>
          <svg width="16" height="16" viewBox="0 0 16 16"><circle cx="8" cy="8" r="7.500" fill="#1828b8" stroke="#8890e0" /><text x="4.500" y="12" fontSize="12" fontWeight="700" fill="#fff" fontFamily="Liberation Sans">?</text></svg>
          <svg width="7" height="14" viewBox="0 0 7 14" className="ml-1"><path d="M1 2 H6" stroke="#fff" strokeWidth="2" /><path d="M0.500 9 H6.500 L3.500 12z" fill="#fff" /></svg>
        </div>
      </div>
      <Taskbar />
      <Popview />
      <DrillManager />
      <svg className="pointer-events-none absolute top-[585px] left-[900px] h-[240px] w-[565px]" viewBox="0 0 565 240" aria-label="Pointer arrow">
        <path d="M20 13 L553 230" stroke="#f00" strokeWidth="5" strokeLinecap="round" />
        <path d="M4 6 L34 7 L26 24z" fill="#f00" />
      </svg>
    </div>
  );
}
